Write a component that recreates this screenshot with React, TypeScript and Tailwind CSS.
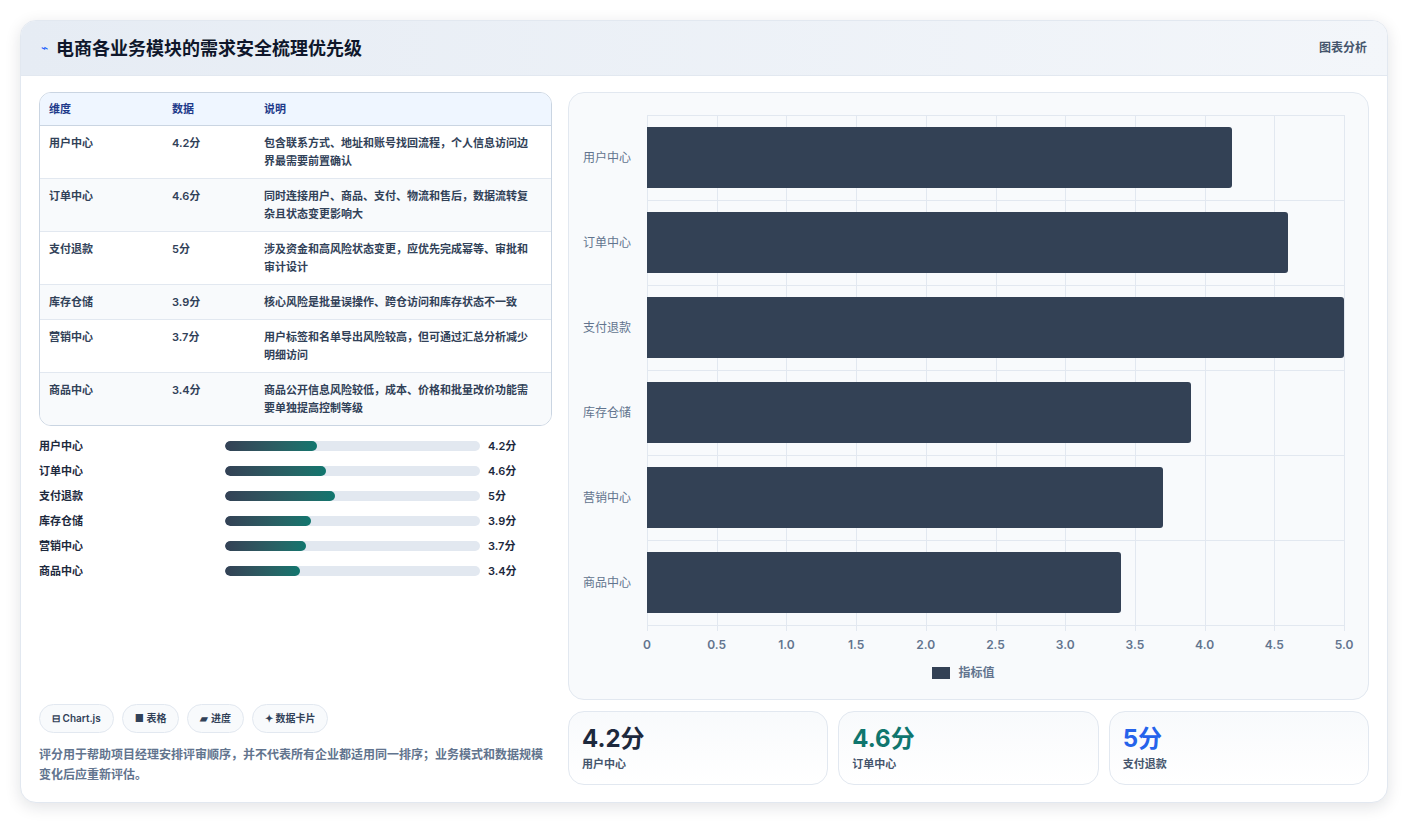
const rows = [
  { name: '用户中心', v: 4.2, desc: '包含联系方式、地址和账号找回流程，个人信息访问边界最需要前置确认' },
  { name: '订单中心', v: 4.6, desc: '同时连接用户、商品、支付、物流和售后，数据流转复杂且状态变更影响大' },
  { name: '支付退款', v: 5, desc: '涉及资金和高风险状态变更，应优先完成幂等、审批和审计设计' },
  { name: '库存仓储', v: 3.9, desc: '核心风险是批量误操作、跨仓访问和库存状态不一致' },
  { name: '营销中心', v: 3.7, desc: '用户标签和名单导出风险较高，但可通过汇总分析减少明细访问' },
  { name: '商品中心', v: 3.4, desc: '商品公开信息风险较低，成本、价格和批量改价功能需要单独提高控制等级' },
]

const ticks = ['0', '0.5', '1.0', '1.5', '2.0', '2.5', '3.0', '3.5', '4.0', '4.5', '5.0']

export default function App() {
  return (
    <div className="min-h-[825px] bg-white p-5" style={{ fontFamily: 'Inter, "Noto Sans CJK SC", sans-serif' }}>
      <div className="rounded-2xl border border-slate-200 bg-white shadow-[0_4px_16px_rgba(15,23,42,0.12)] overflow-hidden">
        <div className="h-[55px] flex items-center justify-between px-5 bg-gradient-to-r from-[#e6ecf4] to-[#f3f6fa] border-b border-slate-200">
          <div className="flex items-center gap-2">
            <span className="text-blue-600 text-xs">⌁</span>
            <h1 className="text-[18px] font-bold text-slate-900">电商各业务模块的需求安全梳理优先级</h1>
          </div>
          <span className="text-xs font-semibold text-slate-600">图表分析</span>
        </div>
        <div className="flex gap-4 px-[18px] pt-4 pb-[17px]">
          <div className="w-[513px] flex flex-col">
            <div className="rounded-xl border border-slate-300 overflow-hidden text-[11px]">
              <div className="flex h-[33px] items-center bg-[#eff6ff] text-[#1e3a8a] font-semibold border-b border-slate-300 px-[9px]">
                <div className="w-[123px]">维度</div>
                <div className="w-[92px]">数据</div>
                <div className="flex-1">说明</div>
              </div>
              {rows.map((r, i) => (
                <div key={r.name} className={`flex px-[9px] py-[8px] text-slate-700 font-semibold ${i < 5 ? 'border-b border-slate-200' : ''} ${i % 2 ? 'bg-[#f8fafc]' : 'bg-white'}`}>
                  <div className="w-[123px] leading-[18px]">{r.name}</div>
                  <div className="w-[92px] leading-[18px]">{r.v}分</div>
                  <div className="flex-1 leading-[18px] pr-1">{r.desc}</div>
                </div>
              ))}
            </div>
            <div className="flex flex-col gap-[7px] mt-[11px]">
              {rows.map((r) => (
                <div key={r.name} className="flex items-center h-[18px] text-[11px] font-semibold text-slate-800">
                  <div className="w-[186px]">{r.name}</div>
                  <div className="w-[255px] h-[10px] rounded-full bg-[#e2e8f0] overflow-hidden">
                    <div className="h-full rounded-full bg-gradient-to-r from-[#334155] to-[#0f766e]" style={{ width: `${(r.v / 5) * 43}%` }} />
                  </div>
                  <div className="ml-2">{r.v}分</div>
                </div>
              ))}
            </div>
            <div className="flex-1" />
            <div className="flex gap-2 text-[10px] font-semibold text-slate-700">
              <span className="px-3 py-[6px] rounded-full border border-slate-200 bg-[#f8fafc]">⊟ Chart.js</span>
              <span className="px-3 py-[6px] rounded-full border border-slate-200 bg-[#f8fafc]">■ 表格</span>
              <span className="px-3 py-[6px] rounded-full border border-slate-200 bg-[#f8fafc]">▰ 进度</span>
              <span className="px-3 py-[6px] rounded-full border border-slate-200 bg-[#f8fafc]">✦ 数据卡片</span>
            </div>
            <p className="mt-3 text-[12px] leading-[20px] font-semibold text-slate-500">评分用于帮助项目经理安排评审顺序，并不代表所有企业都适用同一排序；业务模式和数据规模变化后应重新评估。</p>
          </div>
          <div className="flex-1 flex flex-col gap-[11px]">
            <div className="h-[608px] rounded-2xl border border-slate-200 bg-[#f8fafc] pt-[22px] pr-6 pl-[14px] flex flex-col">
              <div className="flex h-[511px]">
                <div className="w-[64px] flex flex-col text-[12px] text-slate-500">
                  {rows.map((r) => (
                    <div key={r.name} className="flex-1 flex items-center">{r.name}</div>
                  ))}
                </div>
                <div className="relative flex-1 border-b border-slate-300">
                  {ticks.map((t, i) => (
                    <div key={t} className="absolute top-0 bottom-[-6px] border-l border-slate-200" style={{ left: `${i * 10}%` }} />
                  ))}
                  {[0, 1, 2, 3, 4, 5, 6].map((i) => (
                    <div key={i} className="absolute left-0 right-0 border-t border-slate-200" style={{ top: `${(i / 6) * 100}%` }} />
                  ))}
                  <div className="relative h-full flex flex-col">
                    {rows.map((r) => (
                      <div key={r.name} className="flex-1 flex items-center">
                        <div className="h-[61px] bg-[#334155] rounded-r-[3px]" style={{ width: `${(r.v / 5) * 100}%` }} />
                      </div>
                    ))}
                  </div>
                </div>
              </div>
              <div className="flex ml-[64px] relative h-6 text-[12px] font-semibold text-slate-500">
                {ticks.map((t, i) => (
                  <span key={t} className="absolute top-[10px] -translate-x-1/2" style={{ left: `${i * 10}%` }}>{t}</span>
                ))}
              </div>
              <div className="flex items-center justify-center gap-2 mt-[14px] text-[12px] font-semibold text-slate-500">
                <span className="w-[18px] h-[12px] bg-[#334155]" />指标值
              </div>
            </div>
            <div className="grid grid-cols-3 gap-[10px]">
              {[
                { v: '4.2分', n: '用户中心', c: 'text-slate-800' },
                { v: '4.6分', n: '订单中心', c: 'text-[#0f766e]' },
                { v: '5分', n: '支付退款', c: 'text-[#2563eb]' },
              ].map((s) => (
                <div key={s.n} className="h-[74px] rounded-2xl border border-slate-200 bg-gradient-to-b from-[#f8fafc] to-white px-[13px] pt-[12px]">
                  <div className={`text-[24px] leading-[30px] font-bold ${s.c}`}>{s.v}</div>
                  <div className="text-[11px] font-semibold text-slate-600 mt-[2px]">{s.n}</div>
                </div>
              ))}
            </div>
          </div>
        </div>
      </div>
    </div>
  )
}
